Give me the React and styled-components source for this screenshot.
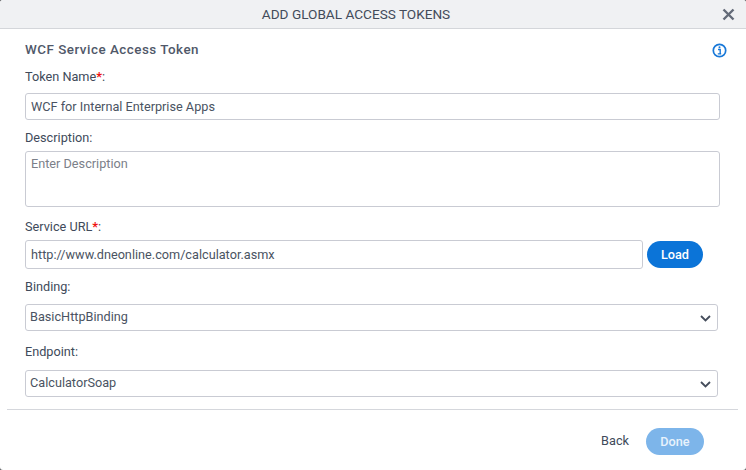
import React from 'react';
import styled, { createGlobalStyle } from 'styled-components';

const GlobalStyle = createGlobalStyle`
  html, body {
    margin: 0;
    padding: 0;
    background: #5f6064;
    font-family: Roboto, "Liberation Sans", sans-serif;
  }
`;

const Dialog = styled.div`
  width: 746px;
  height: 470px;
  display: flex;
  flex-direction: column;
  background: #ffffff;
  color: #3f4a5c;
  border-radius: 3px;
  overflow: hidden;
`;

const Header = styled.header`
  position: relative;
  flex: none;
  height: 28px;
  padding-right: 34px;
  display: flex;
  align-items: center;
  justify-content: center;
  background: #f0f1f3;
  border-bottom: 1px solid #d4d6da;
  font-size: 13.6px;
  font-weight: 400;
  color: #434b5a;
`;

const CloseButton = styled.button`
  position: absolute;
  right: 10px;
  top: 7px;
  width: 15px;
  height: 15px;
  padding: 0;
  border: 0;
  background: none;
  display: flex;
  color: #646b78;
`;

const Body = styled.div`
  flex: none;
  height: 380px;
  margin: 0 8px 0 7px;
  padding: 0 18px;
  border-bottom: 1px solid #d5d7dc;
  display: flex;
  flex-direction: column;
`;

const TitleRow = styled.div`
  display: flex;
  align-items: center;
  justify-content: space-between;
  height: 16px;
  margin-top: 12px;
`;

const SectionTitle = styled.h2`
  margin: 0;
  font-size: 13.4px;
  font-weight: 500;
  letter-spacing: 0.5px;
  color: #505869;
`;

const InfoIcon = styled.svg`
  width: 15px;
  height: 15px;
  margin-top: 3px;
  margin-right: -7px;
  color: #1878d8;
`;

const Label = styled.label`
  display: block;
  height: 15px;
  margin-top: ${props => props.$top}px;
  margin-bottom: ${props => props.$bottom}px;
  font-size: 12.7px;
  line-height: 15px;
  color: #404a5a;
`;

const Required = styled.span`
  color: #f01010;
  font-weight: 700;
`;

const Input = styled.input`
  box-sizing: border-box;
  display: block;
  width: ${props => props.$width || '695px'};
  height: ${props => props.$height || '27px'};
  padding: 0 5px;
  border: 1px solid #c9cbd3;
  border-radius: 3px;
  background: #ffffff;
  font: 400 12.7px Roboto, sans-serif;
  color: #4a5362;
  outline: none;
`;

const TextArea = styled.textarea`
  box-sizing: border-box;
  display: block;
  width: 695px;
  height: 56px;
  padding: 4px 5px;
  border: 1px solid #c9cbd3;
  border-radius: 3px;
  resize: none;
  font: 400 12.7px Roboto, sans-serif;
  outline: none;

  &::placeholder {
    color: #7b8089;
    opacity: 1;
  }
`;

const UrlRow = styled.div`
  display: flex;
  align-items: center;
  gap: 4px;
`;

const PillButton = styled.button`
  flex: none;
  width: ${props => props.$width}px;
  height: 27px;
  padding: 0;
  border: 0;
  border-radius: 14px;
  background: ${props => (props.disabled ? '#7db5ea' : '#0b74d8')};
  color: ${props => (props.disabled ? '#e8f2fc' : '#ffffff')};
  font: 500 12.7px Roboto, sans-serif;
`;

const Select = styled.div`
  box-sizing: border-box;
  width: 693px;
  height: 27px;
  padding: 0 5px 2px 4px;
  display: flex;
  align-items: center;
  justify-content: space-between;
  border: 1px solid #c9cbd3;
  border-radius: 3px;
  font-size: 12.7px;
  color: #4a5362;
`;

const Chevron = styled.svg`
  width: 11px;
  height: 7px;
  margin-top: 3px;
  margin-right: 1px;
  color: #454d5c;
`;

const Footer = styled.footer`
  flex: 1;
  display: flex;
  align-items: flex-start;
  justify-content: flex-end;
  gap: 17px;
  padding: 18px 42px 0 0;
`;

const BackLink = styled.a`
  font-size: 12.7px;
  line-height: 25px;
  color: #404a5a;
`;

function SelectField({ value }) {
  return (
    <Select>
      {value}
      <Chevron viewBox="0 0 11 7" fill="none">
        <path d="M1 1l4.5 4.5L10 1" stroke="currentColor" strokeWidth="1.8" />
      </Chevron>
    </Select>
  );
}

export default function App() {
  return (
    <Dialog>
      <GlobalStyle />
      <Header>
        ADD GLOBAL ACCESS TOKENS
        <CloseButton aria-label="Close">
          <svg viewBox="0 0 15 15" width="15" height="15" fill="none">
            <path d="M2.5 2.5l10 10M12.5 2.5l-10 10" stroke="currentColor" strokeWidth="2.4" />
          </svg>
        </CloseButton>
      </Header>
      <Body>
        <TitleRow>
          <SectionTitle>WCF Service Access Token</SectionTitle>
          <InfoIcon viewBox="0 0 15 15" fill="none">
            <circle cx="7.5" cy="7.5" r="6.2" stroke="currentColor" strokeWidth="1.7" />
            <rect x="6.5" y="3.2" width="2" height="2" rx="1" fill="currentColor" />
            <path d="M6 6.5h2.2v4.2M5.8 10.9h3.4" stroke="currentColor" strokeWidth="1.4" />
          </InfoIcon>
        </TitleRow>
        <Label $top={12} $bottom={9}>Token Name<Required>*</Required>:</Label>
        <Input defaultValue="WCF for Internal Enterprise Apps" />
        <Label $top={10} $bottom={6}>Description:</Label>
        <TextArea placeholder="Enter Description" />
        <Label $top={12} $bottom={6}>Service URL<Required>*</Required>:</Label>
        <UrlRow>
          <Input $width="618px" $height="29px" defaultValue="http://www.dneonline.com/calculator.asmx" />
          <PillButton $width={56}>Load</PillButton>
        </UrlRow>
        <Label $top={10} $bottom={10}>Binding:</Label>
        <SelectField value="BasicHttpBinding" />
        <Label $top={13} $bottom={11}>Endpoint:</Label>
        <SelectField value="CalculatorSoap" />
      </Body>
      <Footer>
        <BackLink>Back</BackLink>
        <PillButton $width={58} disabled>Done</PillButton>
      </Footer>
    </Dialog>
  );
}
